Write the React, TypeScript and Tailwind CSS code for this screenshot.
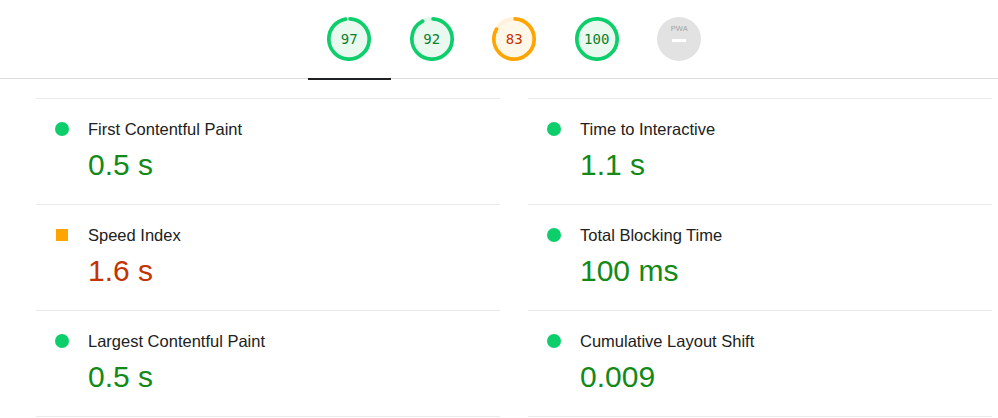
import React from "react";

type Tone = "pass" | "average";

const gauges: { score: number; tone: Tone }[] = [
  { score: 97, tone: "pass" },
  { score: 92, tone: "pass" },
  { score: 83, tone: "average" },
  { score: 100, tone: "pass" },
];

const metrics: { label: string; value: string; tone: Tone }[] = [
  { label: "First Contentful Paint", value: "0.5 s", tone: "pass" },
  { label: "Time to Interactive", value: "1.1 s", tone: "pass" },
  { label: "Speed Index", value: "1.6 s", tone: "average" },
  { label: "Total Blocking Time", value: "100 ms", tone: "pass" },
  { label: "Largest Contentful Paint", value: "0.5 s", tone: "pass" },
  { label: "Cumulative Layout Shift", value: "0.009", tone: "pass" },
];

function Gauge({ score, tone }: { score: number; tone: Tone }) {
  const r = 55;
  const c = 2 * Math.PI * r;
  const stroke = tone === "pass" ? "#0cce6b" : "#ffa400";
  const fill = tone === "pass" ? "#e9f9f0" : "#fff7e8";
  const base = tone === "pass" ? "#e2f7ea" : "#fff1dc";
  return (
    <div className="relative h-[44px] w-[44px]">
      <svg viewBox="0 0 120 120" className="h-[44px] w-[44px]">
        <circle cx="60" cy="60" r={r} fill={fill} stroke={base} strokeWidth="10" />
        <circle
          cx="60"
          cy="60"
          r={r}
          fill="none"
          stroke={stroke}
          strokeWidth="10"
          strokeLinecap="round"
          strokeDasharray={`${(score / 100) * c - 4} ${c}`}
          transform="rotate(-87 60 60)"
        />
      </svg>
      <span
        className={`absolute inset-0 flex items-center justify-center font-['DejaVu_Sans_Mono',monospace] text-[14px] ${
          tone === "pass" ? "text-[#0a7f2e]" : "text-[#c33300]"
        }`}
      >
        {score}
      </span>
    </div>
  );
}

function PwaBadge() {
  return (
    <div className="flex h-[44px] w-[44px] flex-col items-center rounded-full bg-[#e2e2e2]">
      <span className="mt-[8px] font-['Liberation_Sans',sans-serif] text-[7.5px] leading-[8px] text-[#a3a3a3]">
        PWA
      </span>
      <span className="mt-[6px] h-[3px] w-[14px] bg-white" />
    </div>
  );
}

export default function App() {
  return (
    <div className="h-[418px] w-[998px] overflow-hidden bg-white font-['Liberation_Sans',Arial,sans-serif]">
      <div className="flex h-[78px] pl-[308px]">
        {gauges.map((g, i) => (
          <div key={i} className="flex w-[82.5px] items-center justify-center">
            <Gauge score={g.score} tone={g.tone} />
          </div>
        ))}
        <div className="flex w-[82.5px] items-center justify-center">
          <PwaBadge />
        </div>
      </div>
      <div className="h-px bg-[#dcdcdc]">
        <div className="ml-[308px] h-[2px] w-[83px] bg-[#202124]" />
      </div>

      <div className="mt-[19px] grid grid-cols-[464px_464px] gap-x-[28px] pl-[36px]">
        {metrics.map((m) => (
          <div
            key={m.label}
            className="border-t border-[#ebebeb] pt-[20px] pb-[21px] last:border-b [&:nth-last-child(2)]:border-b"
          >
            <div className="flex h-[20px] items-center">
              <div className="flex w-[52px] justify-start pl-[19px]">
                {m.tone === "pass" ? (
                  <span className="h-[14px] w-[14px] rounded-full bg-[#0cce6b]" />
                ) : (
                  <span className="ml-px h-[12px] w-[12px] bg-[#ffa400]" />
                )}
              </div>
              <span className="text-[16.5px] leading-[20px] text-[#212121]">{m.label}</span>
            </div>
            <div
              className={`mt-[8px] pl-[52px] text-[30px] leading-[36px] ${
                m.tone === "pass" ? "text-[#138a17]" : "text-[#c33300]"
              }`}
            >
              {m.value}
            </div>
          </div>
        ))}
      </div>
    </div>
  );
}
